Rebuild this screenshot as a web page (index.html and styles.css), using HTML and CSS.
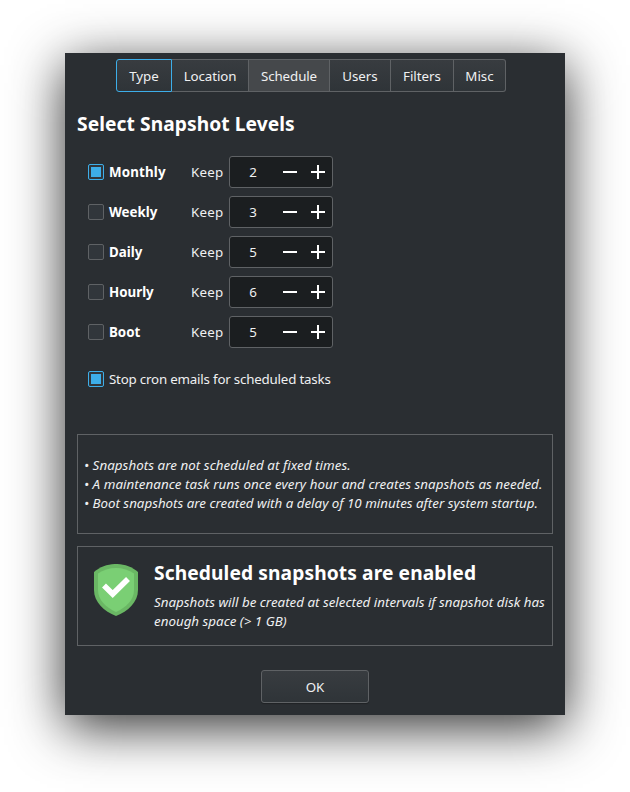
FILE: index.html
```html
<!DOCTYPE html>
<html lang="en">
<head>
<meta charset="utf-8">
<title>Snapshot schedule</title>
<link rel="stylesheet" href="styles.css">
</head>
<body>
<main class="window">
  <nav class="tabs">
    <button class="tab tab-type">Type</button>
    <button class="tab tab-location">Location</button>
    <button class="tab tab-schedule">Schedule</button>
    <button class="tab tab-users">Users</button>
    <button class="tab tab-filters">Filters</button>
    <button class="tab tab-misc">Misc</button>
  </nav>

  <h1 class="heading">Select Snapshot Levels</h1>

  <section class="levels">
    <div class="level"><span class="check checked"></span><b class="name wide">Monthly</b><span class="keep">Keep</span>
      <div class="spin"><span class="value">2</span><i class="minus"></i><i class="plus"></i></div></div>
    <div class="level"><span class="check"></span><b class="name">Weekly</b><span class="keep">Keep</span>
      <div class="spin"><span class="value">3</span><i class="minus"></i><i class="plus"></i></div></div>
    <div class="level"><span class="check"></span><b class="name">Daily</b><span class="keep">Keep</span>
      <div class="spin"><span class="value">5</span><i class="minus"></i><i class="plus"></i></div></div>
    <div class="level"><span class="check"></span><b class="name">Hourly</b><span class="keep">Keep</span>
      <div class="spin"><span class="value">6</span><i class="minus"></i><i class="plus"></i></div></div>
    <div class="level"><span class="check"></span><b class="name">Boot</b><span class="keep">Keep</span>
      <div class="spin"><span class="value">5</span><i class="minus"></i><i class="plus"></i></div></div>
  </section>

  <div class="cron"><span class="check checked"></span><span class="cron-label">Stop cron emails for scheduled tasks</span></div>

  <section class="panel notes">
    <p class="loose">• Snapshots are not scheduled at fixed times.</p>
    <p class="loose">• A maintenance task runs once every hour and creates snapshots as needed.</p>
    <p>• Boot snapshots are created with a delay of 10 minutes after system startup.</p>
  </section>

  <section class="panel status">
    <svg class="shield" width="44" height="52" viewBox="0 0 44 52">
      <path fill="#6ab764" d="M0 8C12-2.700 32-2.700 44 8V26C44 38 34 47.500 22 52C10 47.500 0 38 0 26Z"/>
      <path fill="#7acf74" d="M4 9.500C14 2 30 2 40 9.500V26C40 36 32 43.500 22 48C12 43.500 4 36 4 26Z"/>
      <path fill="none" stroke="#fff" stroke-width="5.600" d="M10 21.500L18.700 30L34 15"/>
    </svg>
    <div>
      <h2 class="status-title">Scheduled snapshots are enabled</h2>
      <p class="status-text">Snapshots will be created at selected intervals if snapshot disk has enough space (&gt; 1 GB)</p>
    </div>
  </section>

  <button class="ok">OK</button>
</main>
</body>
</html>
```
FILE: styles.css
```css
* { box-sizing: border-box; }
body {
  margin: 0;
  padding: 53px 65px 0;
  height: 792px;
  overflow: hidden;
  background: #fff;
  font: 13.333px/19px "Noto Sans", sans-serif;
  color: #eff0f1;
}
h1, h2, p { margin: 0; }
.window {
  width: 500px;
  height: 662px;
  padding: 6px 12px 0;
  background: #2a2e32;
  box-shadow: 0 12px 50px rgba(0, 0, 0, .82);
  display: flex;
  flex-direction: column;
}
button {
  font: inherit;
  color: inherit;
  padding: 2px 0 0;
  border: 1px solid #5f6265;
  background: linear-gradient(#383c40, #2f3438);
}
.tabs { display: flex; height: 33px; margin-left: 39px; }
.tab { border-left-width: 0; }
.tab-type { width: 56px; border: 1px solid #3daee9; border-radius: 3px 0 0 3px; }
.tab-location { width: 77px; letter-spacing: -.1px; }
.tab-schedule { width: 81px; background: #45484b; letter-spacing: -.1px; }
.tab-users { width: 61px; }
.tab-filters { width: 63px; }
.tab-misc { width: 52px; border-radius: 0 3px 3px 0; }
.heading { margin-top: 18px; font-size: 19.200px; line-height: 28px; letter-spacing: .08px; color: #fff; }
.levels { display: grid; gap: 8px; margin: 18px 0 0 11px; }
.level { display: flex; align-items: center; height: 32px; }
.check {
  flex: none;
  width: 16px;
  height: 16px;
  padding: 2px;
  border: 1px solid #5f6265;
  border-radius: 2px;
  background: #31363b;
}
.checked { border-color: #3daee9; background: linear-gradient(#3daee9, #3daee9) content-box, #31363b; }
.name { width: 82px; margin-left: 5px; color: #fff; }
.wide { letter-spacing: .15px; }
.keep { width: 38px; letter-spacing: .2px; }
.spin {
  display: flex;
  align-items: center;
  width: 104px;
  height: 32px;
  border: 1px solid #5f6265;
  border-radius: 3px;
  background: #1b1e20;
}
.value { width: 46px; text-align: center; }
.minus { width: 14px; height: 2px; margin-left: 7px; background: #fff; }
.plus {
  width: 14px;
  height: 14px;
  margin-left: 14px;
  background: linear-gradient(#fff, #fff) center / 14px 2px no-repeat,
              linear-gradient(#fff, #fff) center / 2px 14px no-repeat;
}
.cron { display: flex; align-items: center; gap: 5px; height: 20px; margin: 21px 0 0 11px; }
.cron-label { letter-spacing: -.2px; }
.panel { border: 1px solid #5f6265; height: 100px; }
.notes { margin-top: 45px; padding: 21px 0 0 6px; font-style: italic; white-space: nowrap; }
.loose { letter-spacing: .06px; }
.status { display: flex; gap: 16px; margin-top: 12px; padding: 12px 0 0 16px; }
.shield { flex: none; margin-top: 5px; }
.status-title { font-size: 19.200px; line-height: 28px; letter-spacing: .1px; color: #fff; }
.status-text { margin-top: 6px; font-style: italic; letter-spacing: .01px; }
.ok { width: 108px; height: 33px; margin: 24px 0 0 184px; border-radius: 3px; box-shadow: 0 1px 1px rgba(0, 0, 0, .25); }
```
